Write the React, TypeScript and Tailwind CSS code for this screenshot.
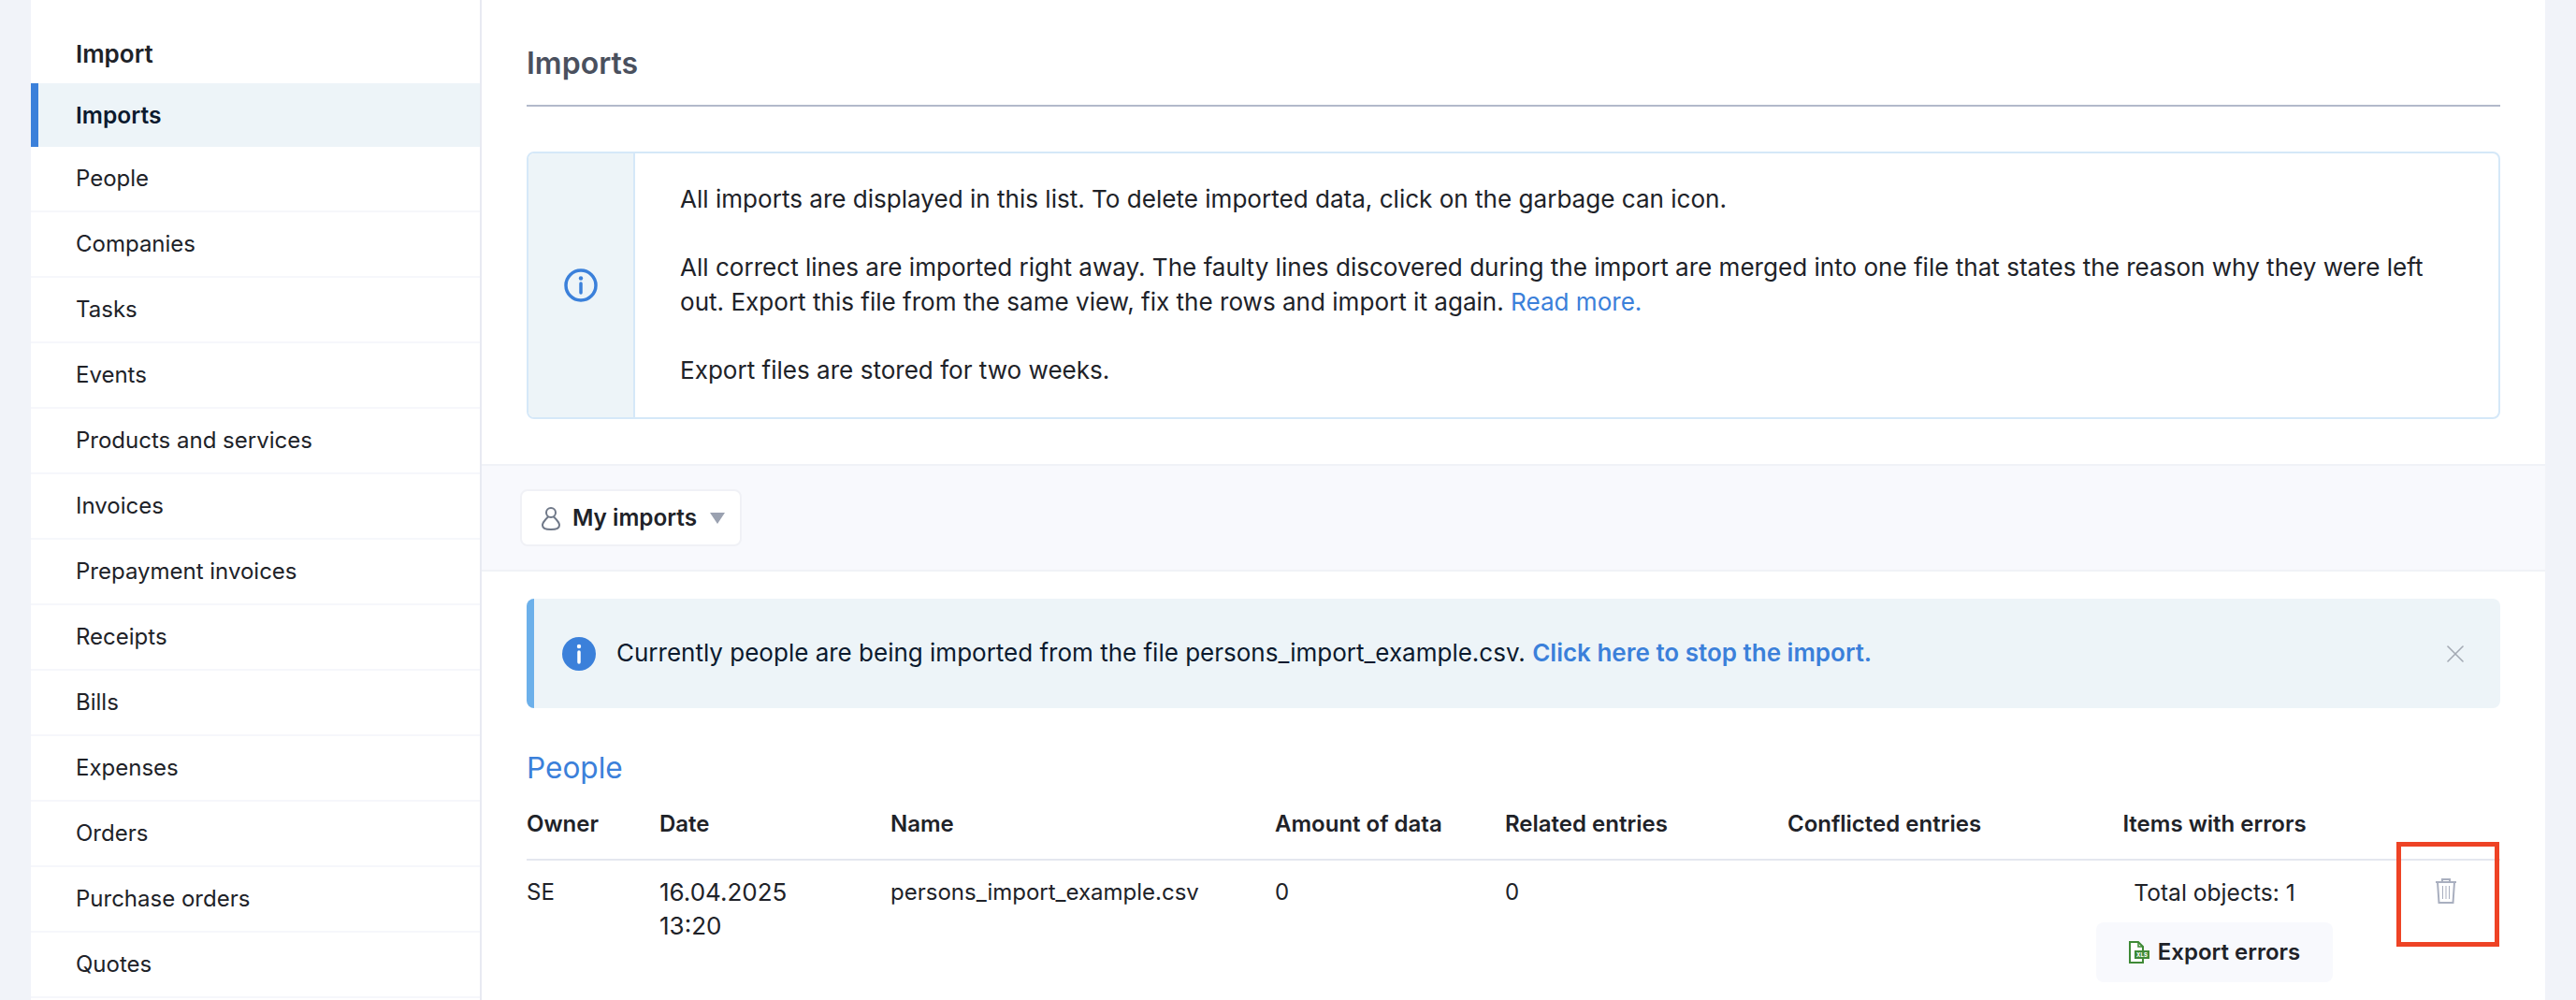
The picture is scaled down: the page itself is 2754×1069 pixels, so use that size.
import { X } from 'lucide-react';

const sideItems = [
  'People',
  'Companies',
  'Tasks',
  'Events',
  'Products and services',
  'Invoices',
  'Prepayment invoices',
  'Receipts',
  'Bills',
  'Expenses',
  'Orders',
  'Purchase orders',
  'Quotes',
];

const UserIcon = () => (
  <svg width="22" height="26" viewBox="0 0 22 26" fill="none" stroke="#6f7888" strokeWidth="2">
    <circle cx="11" cy="7" r="5" />
    <path d="M8 11.5C5 14.5 2 17 2 20.5C2 23.5 5 25 11 25C17 25 20 23.500 20 20.500C20 17 17 14.500 14 11.500" />
  </svg>
);

const TrashIcon = () => (
  <svg width="24" height="28" viewBox="0 0 24 28" fill="none" stroke="#a9afbf" strokeWidth="2">
    <path d="M1 5H23" />
    <path d="M8 4.500V2H16V4.500" />
    <path d="M3 5L4.500 27H19.500L21 5" />
    <path d="M8.500 9V23M12 9V23M15.500 9V23" strokeWidth="1" />
  </svg>
);

const XlsIcon = () => (
  <svg width="22" height="24" viewBox="0 0 22 24" fill="none">
    <path d="M1 1H10L15 6V23H1Z" stroke="#3f8a36" strokeWidth="2" fill="#fff" />
    <path d="M10 1V6H15" stroke="#3f8a36" strokeWidth="1.500" />
    <rect x="6" y="10" width="16" height="9" fill="#3f8a36" />
    <text x="14" y="17" fontSize="6" fontWeight="700" fill="#fff" textAnchor="middle">
      XLS
    </text>
  </svg>
);

const App = () => {
  return (
    <div className="flex h-[1069px] overflow-hidden bg-[#f1f3f9] pl-[33px] font-[Inter,sans-serif] text-[24px] leading-[36.5px] text-[#202228]">
      <aside className="w-[482px] shrink-0 border-r-2 border-[#e8eaf2] bg-white">
        <div className="flex h-[89px] items-end pb-[13px] pl-[48px] text-[26px] font-semibold">Import</div>
        <div className="flex h-[68px] items-center border-l-[8px] border-[#3b80da] bg-[#edf4f8] pl-[40px] text-[24.6px] font-semibold text-[#0b1a2e]">
          Imports
        </div>
        {sideItems.map((item) => (
          <div key={item} className="flex h-[70px] shrink-0 items-center border-b-2 border-[#f6f7fb] pl-[48px]">
            {item}
          </div>
        ))}
      </aside>

      <main className="w-[2206px] shrink-0 bg-white">
        <div className="px-[48px]">
          <div className="h-[114px] border-b-2 border-[#b2b9ca] pt-[47px] text-[32px] font-semibold leading-[42px] text-[#4a505e]">
            Imports
          </div>
          <div className="mt-[48px] flex h-[286px] overflow-hidden rounded-lg border-2 border-[#d5e8f8]">
            <div className="flex w-[114px] shrink-0 items-center justify-center border-r-2 border-[#d5e8f8] bg-[#edf4f8]">
              <svg width="36" height="36" viewBox="0 0 36 36" fill="none" stroke="#3b80da">
                <circle cx="18" cy="18" r="16" strokeWidth="3.500" />
                <path d="M18 16V26" strokeWidth="3.500" strokeLinecap="round" />
                <circle cx="18" cy="10.500" r="2.200" fill="#3b80da" stroke="none" />
              </svg>
            </div>
            <div className="flex-1 pl-[48px] pr-[60px] pt-[31px] text-[26.07px]">
              <p>All imports are displayed in this list. To delete imported data, click on the garbage can icon.</p>
              <p className="mt-[36.5px]">
                All correct lines are imported right away. The faulty lines discovered during the import are merged
                into one file that states the reason why they were left out. Export this file from the same view, fix
                the rows and import it again. <span className="text-[#3b80da]">Read more.</span>
              </p>
              <p className="mt-[36.5px]">Export files are stored for two weeks.</p>
            </div>
          </div>
        </div>

        <div className="mt-[48px] h-[115px] border-y-2 border-[#f0f2f7] bg-[#f8f9fd] pl-[41px] pt-[25px]">
          <div className="flex h-[61px] w-[237px] items-center rounded-lg border-2 border-[#f0f1f6] bg-white pl-[20px]">
            <UserIcon />
            <span className="ml-[12px] text-[24.3px] font-semibold">My imports</span>
            <span className="ml-[14px] h-0 w-0 border-x-[8px] border-t-[12px] border-x-transparent border-t-[#9aa1b0]" />
          </div>
        </div>

        <div className="px-[48px]">
          <div className="mt-[29px] flex h-[117px] items-center rounded-lg border-l-[8px] border-[#6cb0ea] bg-[#edf4f8] pl-[30px] pr-[32px] text-[26px] text-[#0b1a2e]">
            <svg width="36" height="36" viewBox="0 0 36 36" className="shrink-0">
              <circle cx="18" cy="18" r="18" fill="#3b80da" />
              <path d="M18 16V27" stroke="#fff" strokeWidth="3.500" strokeLinecap="round" />
              <circle cx="18" cy="10" r="2.200" fill="#fff" />
            </svg>
            <div className="ml-[22px] flex-1">
              Currently people are being imported from the file persons_import_example.csv.{' '}
              <span className="font-semibold text-[#3b80da]">Click here to stop the import.</span>
            </div>
            <X className="shrink-0 text-[#a3a9b3]" size={32} strokeWidth={1.2} />
          </div>

          <div className="mt-[44px] text-[31.6px] leading-[40px] text-[#3b80da]">People</div>

          <div className="grid grid-cols-[142px_247px_411px_246px_302px_330px_253px_1fr] border-b-2 border-[#e4e7ef] pb-[18px] pt-[22px] font-semibold">
            <div>Owner</div>
            <div>Date</div>
            <div>Name</div>
            <div>Amount of data</div>
            <div>Related entries</div>
            <div>Conflicted entries</div>
            <div className="text-center whitespace-nowrap">Items with errors</div>
            <div />
          </div>

          <div className="grid grid-cols-[142px_247px_411px_246px_302px_330px_253px_1fr] border-b-2 border-[#f0f2f7] pb-[20px] pt-[16px]">
            <div>SE</div>
            <div className="text-[26px]">
              16.04.2025
              <br />
              13:20
            </div>
            <div>persons_import_example.csv</div>
            <div>0</div>
            <div>0</div>
            <div />
            <div className="text-center">
              <div className="text-[24.6px]">Total objects: 1</div>
              <div className="mt-[14px] flex h-[64px] items-center justify-center gap-[9px] rounded-lg bg-[#f8f9fd] font-semibold">
                <XlsIcon />
                Export errors
              </div>
            </div>
            <div className="relative flex items-start justify-center pl-[62px] pt-[2px]">
              <TrashIcon />
              <div className="absolute bottom-[38px] left-[68px] right-[1px] top-[-36px] border-[5px] border-[#ee4325]" />
            </div>
          </div>
        </div>
      </main>
    </div>
  );
};

export default App;
